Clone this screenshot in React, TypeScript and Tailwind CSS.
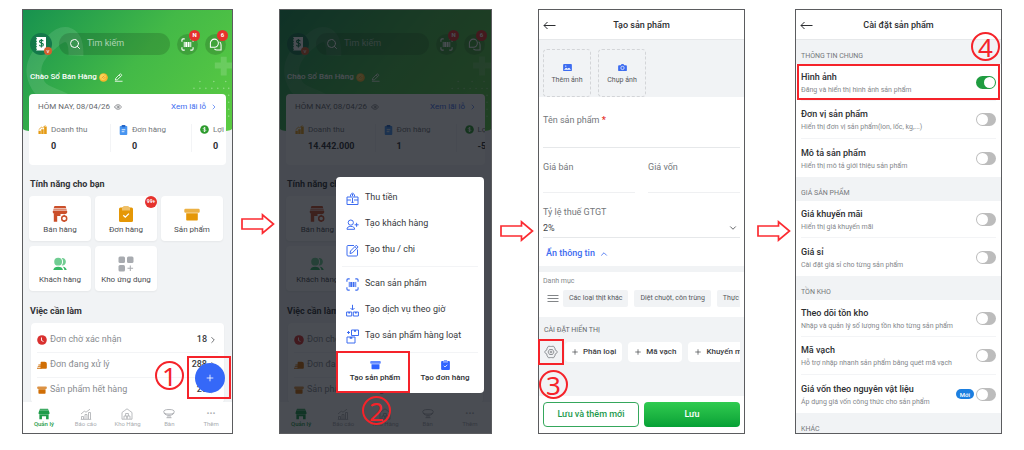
import { ReactNode } from 'react';
import { ChevronDown, ChevronRight, ChevronUp, Eye, Plus, Search } from 'lucide-react';

interface Stats {
  revenue: string;
  orders: string;
  profit: string;
}

interface IconProps {
  className?: string;
}

function StoreIcon({ className }: IconProps) {
  return (
    <svg viewBox="0 0 16 16" className={className} fill="currentColor" aria-hidden="true">
      <path d="M2.500 0h11l.8 2.200H1.700z" />
      <path d="M1.600 2.700h12.800l.7 2H.9z" opacity=".65" />
      <path d="M.8 5.100h14.400c.3 1.700-.5 2.900-1.900 2.900H2.700C1.300 8 .5 6.800.8 5.100z" />
      <path d="M1.800 8h3.400v7.800H1.800zM5 8h3.500v2H5z" />
      <circle cx="12.200" cy="12.500" r="2.500" fill="none" stroke="currentColor" strokeWidth="1.500" />
      <path d="M11.500 8.800h1.400v1.500h-1.400zM11.500 14.700h1.400V16h-1.400z" />
    </svg>
  );
}

function ShopIcon({ className }: IconProps) {
  return (
    <svg viewBox="0 0 14 14" className={className} fill="currentColor" aria-hidden="true">
      <path d="M2.300.8h9.400l.5 1.600H1.800z" opacity=".85" />
      <path d="M1.500 2.700h11l1 3.200c.1 1-.6 1.700-1.600 1.700H2.100c-1 0-1.600-.7-1.500-1.700z" />
      <path d="M1.600 7.500h10.800V13H9.400V9.600H4.600V13h-3z" />
    </svg>
  );
}

function ClipboardIcon({ className }: IconProps) {
  return (
    <svg viewBox="0 0 14 16" className={className} aria-hidden="true">
      <rect y="1.500" width="14" height="14.500" rx="1.500" fill="currentColor" />
      <path d="M4.500 0h5v1.500H11v3H3v-3h1.500z" fill="currentColor" />
      <path d="M4.500 0h5v1.500H11v3H3v-3h1.500z" fill="#fff" fillOpacity=".4" />
      <path d="M4.300 9.200l2 2 3.600-3.600" fill="none" stroke="#fff" strokeWidth="1.300" />
    </svg>
  );
}

function BoxIcon({ className }: IconProps) {
  return (
    <svg viewBox="0 0 16 13" className={className} fill="currentColor" aria-hidden="true">
      <rect x=".3" y=".8" width="15.400" height="3.900" rx="1.200" opacity=".75" />
      <path d="M2.200 5.300h11.600v6.200c0 .7-.5 1-1 1H3.200c-.6 0-1-.4-1-1z" />
    </svg>
  );
}

function PeopleIcon({ className }: IconProps) {
  return (
    <svg viewBox="0 0 15 14" className={className} fill="currentColor" aria-hidden="true">
      <circle cx="5.500" cy="4.500" r="4.200" opacity=".7" />
      <path d="M9.300.5c2.600-.3 4.500 1.600 4.500 4s-1.900 4.300-4.500 4c2-2.400 2-5.600 0-8z" opacity=".7" />
      <path d="M.3 13.500C.6 11.300 2.600 10 5.500 10s4.900 1.300 5.200 3.500zM10.500 10c2.300.2 3.800 1.500 4.200 3.500h-2.500c-.1-1.400-.7-2.600-1.700-3.500z" />
    </svg>
  );
}

function AppsIcon({ className }: IconProps) {
  return (
    <svg viewBox="0 0 16 16" className={className} fill="currentColor" aria-hidden="true">
      <rect x=".5" y=".5" width="6.500" height="6.500" rx="1.500" />
      <rect x="9" y=".5" width="6.500" height="6.500" rx="1.500" />
      <rect x=".5" y="9" width="6.500" height="6.500" rx="1.500" />
      <path d="M11.800 9.500h1v2.300h2.300v1h-2.300v2.300h-1v-2.300H9.500v-1h2.300z" />
    </svg>
  );
}

function ScanIcon({ className }: IconProps) {
  return (
    <svg viewBox="0 0 14 14" className={className} fill="none" stroke="currentColor" strokeWidth="1.200" aria-hidden="true">
      <path d="M1 4V2.200C1 1.500 1.500 1 2.200 1H4M10 1h1.800c.7 0 1.200.5 1.200 1.200V4M13 10v1.800c0 .7-.5 1.200-1.200 1.200H10M4 13H2.200C1.500 13 1 12.500 1 11.800V10" />
      <path d="M3.500 4.200v5.600M10.500 4.200v5.600" strokeWidth="1" />
      <path d="M5.600 4.200v5.600M8.200 4.200v5.600" strokeWidth="2" />
    </svg>
  );
}

function ChatIcon({ className }: IconProps) {
  return (
    <svg viewBox="0 0 14 14" className={className} fill="none" stroke="currentColor" strokeWidth="1.100" aria-hidden="true">
      <path d="M1.500 10V5.500a4.300 4.300 0 118.600 0c0 2.500-1.900 4.500-4.300 4.500z" />
      <path d="M11.500 4.200c1 .7 1.500 1.800 1.500 3.300V13H8.500c-1 0-2-.5-2.700-1.200" />
    </svg>
  );
}

function ReceiptIcon({ className }: IconProps) {
  return (
    <svg viewBox="0 0 22 22" className={className} aria-hidden="true">
      <circle cx="11" cy="11" r="11" fill="#14794a" />
      <path d="M6 4h10v13.500H6l1-1.300-1-1.300 1-1.300-1-1.300 1-1.300-1-1.300 1-1.300-1-1.300 1-1.300z" fill="#fff" />
      <path d="M13.300 8.300c-.3-.8-1-1.200-1.900-1.200-1.100 0-1.900.6-1.900 1.500 0 2 3.900 1 3.900 3.100 0 1-.8 1.600-2 1.600-1 0-1.800-.5-2-1.400M11.400 6v8.400" fill="none" stroke="#14794a" strokeWidth="1.100" />
    </svg>
  );
}

function PencilIcon({ className }: IconProps) {
  return (
    <svg viewBox="0 0 10 10" className={className} fill="none" stroke="currentColor" strokeWidth=".9" aria-hidden="true">
      <path d="M1.500 7.800l.5-2L6.500 1.300c.4-.4.900-.4 1.300 0l.5.5c.4.4.4.900 0 1.300L3.700 7.500zM1 9.200h8.500M5.600 2.300l1.700 1.700" />
    </svg>
  );
}

function CoinIcon({ className }: IconProps) {
  return (
    <svg viewBox="0 0 10 10" className={className} aria-hidden="true">
      <circle cx="5" cy="5" r="4.800" fill="#f6b52c" />
      <circle cx="4.400" cy="4.500" r="3.300" fill="#fbd258" />
      <path d="M3 5.800l3-2.800M5 6.500l2-2" stroke="#e8921c" strokeWidth=".9" />
    </svg>
  );
}

function ChartIcon({ className }: IconProps) {
  return (
    <svg viewBox="0 0 10 10" className={className} fill="currentColor" aria-hidden="true">
      <path d="M.5 6.500h2.600V10H.5zM3.600 4.800h2.700V10H3.600zM6.800 1.800h2.900V10H6.800z" />
      <path d="M.7 5.300l3-2.800 1.300.6L8.300.6" fill="none" stroke="currentColor" strokeWidth=".9" />
    </svg>
  );
}

function NoteIcon({ className }: IconProps) {
  return (
    <svg viewBox="0 0 10 11" className={className} aria-hidden="true">
      <rect x=".8" y="1" width="8.400" height="10" rx="1" fill="#4794f0" />
      <rect x="3" width="4" height="2.500" rx=".5" fill="#2566c8" />
      <path d="M3 5.200h4M3 7.400h3" stroke="#fff" strokeWidth=".9" />
    </svg>
  );
}

function DollarIcon({ className }: IconProps) {
  return (
    <svg viewBox="0 0 10 10" className={className} aria-hidden="true">
      <circle cx="5" cy="5" r="4.800" fill="#2d9b2d" />
      <path d="M6.400 3.700c-.3-.5-.8-.7-1.400-.7-.8 0-1.400.4-1.400.9 0 1.400 2.900.7 2.900 2.100 0 .6-.6 1-1.500 1-.7 0-1.300-.3-1.500-.9M5 2.200v5.600" fill="none" stroke="#fff" strokeWidth=".8" />
    </svg>
  );
}

function ClockIcon({ className }: IconProps) {
  return (
    <svg viewBox="0 0 10 10" className={className} aria-hidden="true">
      <circle cx="5" cy="5" r="4.800" fill="#d9302f" />
      <path d="M4.500 2.500v3l2 1" fill="none" stroke="#fff" strokeWidth=".9" />
    </svg>
  );
}

function MovingIcon({ className }: IconProps) {
  return (
    <svg viewBox="0 0 11 9" className={className} fill="#d06e05" aria-hidden="true">
      <path d="M4 1.500C4 .8 4.500.5 5 .5h3.500c1.500 0 2.300.8 2.300 2.300v4.400c0 .6-.4.900-.9.900H3.800z" />
      <path d="M1.500 3.400h3v1h-3zM.8 5.200h4v1h-4zM0 7.100h5v1H0z" />
    </svg>
  );
}

function ReportTabIcon({ className }: IconProps) {
  return (
    <svg viewBox="0 0 12 12" className={className} fill="none" stroke="currentColor" strokeWidth=".8" aria-hidden="true">
      <path d="M1.500 11V8.500h2V11M5 11V6.500h2V11M8.500 11V4.500h2V11M.8 11.400h10.400M1 6l3.300-2.800 1.700 1 4-3" />
    </svg>
  );
}

function WarehouseIcon({ className }: IconProps) {
  return (
    <svg viewBox="0 0 12 12" className={className} fill="none" stroke="currentColor" strokeWidth=".8" aria-hidden="true">
      <path d="M1 11.200V4.500C2.500 3.500 4 2.200 6 .8c2 1.400 3.500 2.700 5 3.700v6.700zM3 10.800V8h2.800v2.800M6.200 10.800V8H9v2.800M4.600 8V5.500h2.800V8" />
    </svg>
  );
}

function TableIcon({ className }: IconProps) {
  return (
    <svg viewBox="0 0 12 12" className={className} fill="none" stroke="currentColor" strokeWidth=".9" aria-hidden="true">
      <ellipse cx="6" cy="3.800" rx="5.300" ry="2.300" />
      <path d="M1 5c1 1.800 3 2.300 5 2.300S10 6.800 11 5M5 7.300v2.200M7 7.300v2.200M3.500 9.700h5" />
    </svg>
  );
}

function MoneyBoxIcon({ className }: IconProps) {
  return (
    <svg viewBox="0 0 13 13" className={className} fill="none" stroke="currentColor" aria-hidden="true">
      <path d="M1 5h11v7.500H1zM1 8h4M8 8h4M6.500 6v5" />
      <path d="M4.500 4.500V3L6.500.8 8.500 3v1.500M6.500 2v2M5.300 9.800l1.200 1.200 1.200-1.200" />
    </svg>
  );
}

function AddUserIcon({ className }: IconProps) {
  return (
    <svg viewBox="0 0 13 13" className={className} fill="none" stroke="currentColor" aria-hidden="true">
      <circle cx="4.800" cy="4.600" r="2.600" />
      <path d="M1 11.300c0-2 1.300-2.900 3.800-2.900s3.800.9 3.800 2.900zM10.600 4.800v4M8.600 6.800h4" />
    </svg>
  );
}

function ComposeIcon({ className }: IconProps) {
  return (
    <svg viewBox="0 0 13 13" className={className} fill="none" stroke="currentColor" aria-hidden="true">
      <path d="M8 1.500H2c-.6 0-1 .4-1 1V11c0 .6.400 1 1 1h8.500c.6 0 1-.4 1-1V5.500" />
      <path d="M4 9.500l.5-2.500L10.300 1.200l1.800 1.800L6.300 8.900zM9 2.700l1.700 1.800" />
    </svg>
  );
}

function ServiceIcon({ className }: IconProps) {
  return (
    <svg viewBox="0 0 13 13" className={className} fill="none" stroke="currentColor" aria-hidden="true">
      <path d="M6.500.8v5M4.500 4l2 2 2-2M.6 8h5.100v4H.6zM7.300 8h5.100v4H7.300z" />
      <path d="M2.300 8.800h1.700M9 8.800h1.700" strokeWidth="1.600" />
    </svg>
  );
}

function BatchIcon({ className }: IconProps) {
  return (
    <svg viewBox="0 0 13 15" className={className} fill="none" stroke="currentColor" aria-hidden="true">
      <path d="M5.500 1h7v5.500h-7zM1 8h8v6H1zM2.500 2v3M1 3.500h3" />
      <path d="M8 1.800h2M3.700 8.900h2.600" strokeWidth="1.700" />
    </svg>
  );
}

function GearIcon({ className }: IconProps) {
  return (
    <svg viewBox="0 0 14 14" className={className} fill="none" stroke="currentColor" strokeWidth=".9" strokeLinejoin="round" aria-hidden="true">
      <path d="M4.300 1.300h2l.7.7.7-.7h2l1.500 2.600-.2.900.9.300L13.400 7l-1.500 1.900-.9.300.2.900-1.500 2.600h-2L7 12l-.7.7h-2l-1.500-2.600.2-.9-.9-.3L.6 7l1.500-1.900.9-.3-.2-.9z" />
      <path d="M5.500 4.500h3L10 7 8.500 9.500h-3L4 7z" />
      <circle cx="7" cy="7" r=".9" />
    </svg>
  );
}

function StepNumber({ value, className }: { value: number; className: string }) {
  return (
    <span
      className={`absolute z-20 flex size-[29px] items-center justify-center rounded-full border-2 border-[#f5232a] font-['Noto_Sans',sans-serif] text-[26px] leading-none text-[#f5232a] ${className}`}
    >
      {value}
    </span>
  );
}

function FlowArrow({ className }: IconProps) {
  return (
    <div className={`flex justify-end pr-1 ${className}`}>
      <svg viewBox="0 0 34 22" className="h-[22px] w-[34px]" fill="none" stroke="#fb2b31" strokeWidth="1.700" aria-hidden="true">
        <path d="M1 6h20.500V1.800L32.500 11 21.500 20.200V16H1z" />
      </svg>
    </div>
  );
}

function Frame({ children }: { children: ReactNode }) {
  return <section className="relative flex min-w-0 flex-col border border-[#5b5c5f]">{children}</section>;
}

const features = [
  { label: 'Bán hàng', icon: <StoreIcon className="size-4 text-[#cb4f2a]" /> },
  { label: 'Đơn hàng', icon: <ClipboardIcon className="h-4 w-3.5 text-[#e59706]" />, badge: '99+' },
  { label: 'Sản phẩm', icon: <BoxIcon className="h-[13px] w-4 text-[#e59706]" /> },
  { label: 'Khách hàng', icon: <PeopleIcon className="size-3.5 text-[#33b864]" /> },
  { label: 'Kho ứng dụng', icon: <AppsIcon className="size-4 text-[#a8abb0]" /> },
];

const todos = [
  { label: 'Đơn chờ xác nhận', count: '18', icon: <ClockIcon className="size-2.5" /> },
  { label: 'Đơn đang xử lý', count: '288', icon: <MovingIcon className="h-[9px] w-2.5" /> },
  { label: 'Sản phẩm hết hàng', count: '25', icon: <BoxIcon className="h-2 w-2.5 text-[#d06e05]" /> },
];

const tabs = [
  { label: 'Quản lý', icon: <ShopIcon className="size-3" />, active: true },
  { label: 'Báo cáo', icon: <ReportTabIcon className="size-3" /> },
  { label: 'Kho Hàng', icon: <WarehouseIcon className="size-3" /> },
  { label: 'Bàn', icon: <TableIcon className="size-3" /> },
  { label: 'Thêm', icon: <span className="text-[10px] leading-3 font-bold">···</span> },
];

function HomeScreen({ stats }: { stats: Stats }) {
  const items = [
    { label: 'Doanh thu', value: stats.revenue, icon: <ChartIcon className="mt-px size-[9px] text-[#e59b14]" /> },
    { label: 'Đơn hàng', value: stats.orders, icon: <NoteIcon className="mt-px h-2.5 w-[9px]" /> },
    { label: 'Lợi nhuận', value: stats.profit, icon: <DollarIcon className="mt-px size-[9px]" /> },
  ];

  return (
    <div className="flex grow flex-col overflow-hidden bg-[#f1f3f5]">
      <header className="relative px-1.5 pt-[23px]">
        {/* Green backdrop */}
        <div className="absolute inset-x-0 top-0 h-[125px] overflow-hidden rounded-b-[50%_6px] bg-[linear-gradient(130deg,#17924f_0%,#43b947_50%,#5ccc42_100%)]">
          <svg viewBox="0 0 212 126" className="h-full w-full" preserveAspectRatio="xMidYMid slice" aria-hidden="true">
            <path
              d="M54 46C55 22 42 20 30 32 10 48 8 62 16 76 24 90 52 84 58 112"
              fill="none"
              stroke="#fff"
              strokeOpacity=".11"
              strokeWidth="15"
            />
            <path d="M200 47h6v6h8v6h-8v7h-6v-7h-6v-6h6z" fill="#fff" fillOpacity=".15" />
            <g fill="#fff" fillOpacity=".35">
              {[173, 179, 185, 191, 197, 203, 208].map((x) => (
                <circle key={x} cx={x} cy="79" r=".8" />
              ))}
              {[179, 193, 205].map((x) => (
                <circle key={x} cx={x} cy="72" r=".8" />
              ))}
              {[86, 93, 100, 107].map((y) => (
                <circle key={y} cx="208" cy={y} r=".8" />
              ))}
            </g>
          </svg>
        </div>

        <div className="relative flex h-[22px] items-center">
          <div className="relative ml-px size-[22px] shrink-0">
            <ReceiptIcon className="size-[22px]" />
            <span className="absolute right-0 bottom-0 flex size-2 items-center justify-center rounded-full bg-[#d2602f] text-[6px] leading-none text-white">
              v
            </span>
          </div>
          <label className="ml-[7px] flex h-[22px] min-w-0 grow items-center gap-1.5 rounded-full bg-black/15 pl-2.5">
            <Search className="size-3 shrink-0 text-white" strokeWidth={2} />
            <input
              type="search"
              aria-label="Tìm kiếm"
              placeholder="Tìm kiếm"
              className="w-full min-w-0 bg-transparent text-[9px] text-white outline-none placeholder:text-white/60"
            />
          </label>
          <button aria-label="Quét mã" className="relative ml-[7px] flex size-[21px] shrink-0 items-center justify-center rounded-full bg-black/15 text-white">
            <ScanIcon className="size-[13px]" />
            <span className="absolute -top-1 -right-0.5 flex size-[11px] items-center justify-center rounded-full bg-[#e5322d] text-[6px] leading-none font-bold">
              N
            </span>
          </button>
          <button aria-label="Tin nhắn" className="relative ml-[7px] flex size-[21px] shrink-0 items-center justify-center rounded-full bg-black/15 text-white">
            <ChatIcon className="size-[13px]" />
            <span className="absolute -top-1 -right-0.5 flex size-[11px] items-center justify-center rounded-full bg-[#e5322d] text-[6px] leading-none font-bold">
              6
            </span>
          </button>
        </div>

        <div className="relative mt-4 flex h-3 items-center gap-0.5 pl-px text-[8px] font-medium text-white">
          <span>Chào Sổ Bán Hàng</span>
          <CoinIcon className="size-[9px]" />
          <button aria-label="Sửa tên" className="ml-1">
            <PencilIcon className="size-[9px]" />
          </button>
        </div>

        {/* Today summary */}
        <div className="relative mt-[11px] h-[71px] overflow-hidden rounded bg-white pl-[9px]">
          <div className="flex h-[26px] items-center text-[8px]">
            <span className="text-[#65686c]">HÔM NAY, 08/04/26</span>
            <Eye className="ml-1 size-2 text-[#65686c]" />
            <a href="#" className="mr-2 ml-auto flex items-center gap-1 text-[#3d6cf0]">
              Xem lãi lỗ
              <ChevronRight className="size-2" />
            </a>
          </div>
          <div className="mt-1 flex divide-x divide-gray-100">
            {items.map((item) => (
              <div key={item.label} className="mr-2 flex min-w-[73px] shrink-0 gap-1 pr-5">
                {item.icon}
                <div className="whitespace-nowrap">
                  <div className="text-[8px] leading-3 text-[#74777b]">{item.label}</div>
                  <div className="mt-1 text-[9px] leading-3 font-bold text-[#2c2e31]">{item.value}</div>
                </div>
              </div>
            ))}
          </div>
        </div>
      </header>

      <h2 className="mt-[13px] px-[7px] text-[9px] leading-3 font-bold text-[#313337]">Tính năng cho bạn</h2>
      <div className="mt-[6px] mr-[9px] ml-1.5 grid grid-cols-3 gap-x-1 gap-y-[5px]">
        {features.map((feature) => (
          <button key={feature.label} className="relative flex h-[45px] flex-col items-center rounded bg-white pt-2.5 text-[8px] text-[#4b4d51] shadow-xs">
            <span className="flex h-4 items-center">{feature.icon}</span>
            <span className="mt-0.5 leading-3 whitespace-nowrap">{feature.label}</span>
            {feature.badge && (
              <span className="absolute top-0 right-0 flex size-3 items-center justify-center rounded-full bg-[#e5322d] text-[5px] font-bold text-white">
                {feature.badge}
              </span>
            )}
          </button>
        ))}
      </div>

      <h2 className="mt-[14px] px-[7px] text-[9px] leading-3 font-bold text-[#313337]">Việc cần làm</h2>
      <div className="mt-[6px] h-[79px] overflow-hidden px-2">
        <ul className="rounded bg-white px-1.5 pt-[5px] shadow-xs">
          {todos.map((todo) => (
            <li key={todo.label} className="flex h-[25px] items-center border-b border-gray-100 text-[9px]">
              {todo.icon}
              <span className="ml-[3px] text-[#898c90]">{todo.label}</span>
              <span className="mr-px ml-auto font-medium text-[#3a3c3f]">{todo.count}</span>
              <ChevronRight className="size-2.5 text-[#55585c]" />
            </li>
          ))}
        </ul>
      </div>

      <nav className="mt-auto grid h-[31px] shrink-0 grid-cols-5 bg-white">
        {tabs.map((tab) => (
          <a
            key={tab.label}
            href="#"
            className={`flex flex-col items-center pt-[6px] text-[6px] ${tab.active ? 'font-medium text-[#1f9c4a]' : 'text-[#a9acb0]'}`}
          >
            {tab.icon}
            <span className="leading-2">{tab.label}</span>
          </a>
        ))}
      </nav>
    </div>
  );
}

const menuGroups = [
  [
    { label: 'Thu tiền', icon: <MoneyBoxIcon className="size-[13px]" /> },
    { label: 'Tạo khách hàng', icon: <AddUserIcon className="size-[13px]" /> },
    { label: 'Tạo thu / chi', icon: <ComposeIcon className="size-[13px]" /> },
  ],
  [
    { label: 'Scan sản phẩm', icon: <ScanIcon className="size-[13px]" /> },
    { label: 'Tạo dịch vụ theo giờ', icon: <ServiceIcon className="size-[13px]" /> },
    { label: 'Tạo sản phẩm hàng loạt', icon: <BatchIcon className="h-[15px] w-[13px]" /> },
  ],
];

function QuickMenu() {
  return (
    <div className="absolute right-[7px] bottom-10 w-[148px] rounded bg-white">
      <div className="px-1.5 pt-1">
        {menuGroups.map((group, i) => (
          <div key={i} className="border-b border-gray-100 pt-1 pb-[3px]">
            {group.map((item) => (
              <button key={item.label} className="flex h-[26px] w-full items-center gap-1.5 pl-1 text-[9px] whitespace-nowrap text-[#37393d]">
                <span className="text-[#3d6cf0]">{item.icon}</span>
                {item.label}
              </button>
            ))}
          </div>
        ))}
      </div>
      <div className="grid grid-cols-2 text-[8px] font-medium text-[#2c2e31]">
        <button className="relative flex h-10 flex-col items-center pt-[7px] pl-1">
          <BoxIcon className="h-2.5 w-[11px] text-[#2f62ff]" />
          <span className="mt-0.5 leading-3 whitespace-nowrap">Tạo sản phẩm</span>
          <span className="absolute inset-x-0 -top-0.5 bottom-0 border-2 border-[#f5232a]" />
        </button>
        <button className="flex h-10 flex-col items-center pt-[7px] pr-1">
          <ClipboardIcon className="h-2.5 w-[9px] text-[#2f62ff]" />
          <span className="mt-0.5 leading-3 whitespace-nowrap">Tạo đơn hàng</span>
        </button>
      </div>
      <StepNumber value={2} className="-bottom-8 left-[26px]" />
    </div>
  );
}

function ScreenHeader({ title }: { title: string }) {
  return (
    <header className="relative flex h-[30px] shrink-0 items-center justify-center border-b border-[#e6e8ea] bg-white pt-0.5">
      <button aria-label="Quay lại" className="absolute left-1 text-[#2c2e31]">
        <svg viewBox="0 0 13 9" className="h-[9px] w-[13px]" fill="none" stroke="currentColor" aria-hidden="true">
          <path d="M1 4.500h11.500M4.500 1L1 4.500 4.500 8" />
        </svg>
      </button>
      <h1 className="text-[9px] font-medium text-[#2c2e31]">{title}</h1>
    </header>
  );
}

function CreateProductScreen() {
  return (
    <div className="flex grow flex-col bg-white text-[8px]">
      <ScreenHeader title="Tạo sản phẩm" />

      <div className="flex gap-[7px] bg-[#f1f3f5] px-1 pt-[9px]">
        <button className="flex h-12 w-12 flex-col items-center justify-center gap-1 rounded-sm border border-dashed border-[#d3d5d8] pt-1 text-[7px] text-[#55585c]">
          <svg viewBox="0 0 10 8" className="h-[7px] w-[9px]" aria-hidden="true">
            <rect width="10" height="8" rx="1" fill="#3d6cf0" />
            <path d="M1 6.500l2.300-2.300L5 5.500l1.800-1.300L9 6.500z" fill="#fff" />
            <circle cx="3" cy="2.400" r=".8" fill="#fff" />
          </svg>
          Thêm ảnh
        </button>
        <button className="flex h-12 w-12 flex-col items-center justify-center gap-1 rounded-sm border border-dashed border-[#d3d5d8] pt-1 text-[7px] text-[#55585c]">
          <svg viewBox="0 0 10 8" className="h-[7px] w-[9px]" aria-hidden="true">
            <path d="M1 1.500h2L4 0h2l1 1.500h2c.6 0 1 .4 1 1V7c0 .6-.4 1-1 1H1c-.6 0-1-.4-1-1V2.500c0-.6.4-1 1-1z" fill="#3d6cf0" />
            <circle cx="5" cy="4.500" r="1.900" fill="none" stroke="#fff" strokeWidth=".8" />
          </svg>
          Chụp ảnh
        </button>
      </div>

      <div className="px-1 text-[9px] text-[#74777b]">
        <label className="flex h-[51px] flex-col border-b border-[#e6e8ea] pt-[17px] leading-3">
          <span>
            Tên sản phẩm <span className="font-bold text-[#e5322d]">*</span>
          </span>
          <input className="h-4 w-full outline-none" />
        </label>
        <div className="grid grid-cols-2 gap-[13px]">
          <label className="flex h-[45px] flex-col border-b border-[#eff0f2] pt-[13px] leading-3">
            Giá bán
            <input inputMode="numeric" className="h-4 w-full outline-none" />
          </label>
          <label className="flex h-[45px] flex-col border-b border-[#eff0f2] pt-[13px] leading-3">
            Giá vốn
            <input inputMode="numeric" className="h-4 w-full outline-none" />
          </label>
        </div>
        <label className="relative flex h-[45px] flex-col border-b border-[#e6e8ea] pt-[13px] leading-3">
          Tỷ lệ thuế GTGT
          <select className="mt-1 h-3 w-full appearance-none bg-transparent leading-3 text-[#44474b] outline-none">
            <option>2%</option>
          </select>
          <ChevronDown className="pointer-events-none absolute right-0.5 bottom-1 size-2.5 text-[#44474b]" />
        </label>
        <button className="flex h-7 items-center gap-1 px-[3px] pt-1 font-medium text-[#3d6cf0]">
          Ẩn thông tin
          <ChevronUp className="size-2.5" />
        </button>
      </div>

      <div className="border-t-6 border-[#f1f3f5] px-1 pt-1">
        <div className="text-[7px] leading-[10px] text-[#85888c]">Danh mục</div>
        <div className="mt-1 flex items-center gap-1.5 overflow-hidden pb-2.5 text-[7px] text-[#55585c]">
          <button aria-label="Danh mục" className="px-1 text-[#74777b]">
            <svg viewBox="0 0 12 9" className="h-[9px] w-3" fill="none" stroke="currentColor" strokeWidth=".9" aria-hidden="true">
              <path d="M.5 1.500h11M.5 4.500h11M.5 7.500h11" />
            </svg>
          </button>
          <button className="-ml-1.5 h-[17px] shrink-0 rounded-xs bg-[#f1f3f5] px-1.5">Các loại thịt khác</button>
          <button className="h-[17px] shrink-0 rounded-xs bg-[#f1f3f5] px-1.5">Diệt chuột, côn trùng</button>
          <button className="h-[17px] shrink-0 rounded-xs bg-[#f1f3f5] px-1.5">Thực phẩm</button>
        </div>
      </div>

      <div className="relative grow bg-[#f1f3f5] px-1 pt-2">
        <div className="pl-px text-[7px] leading-[10px] text-[#65686c]">CÀI ĐẶT HIỂN THỊ</div>
        <div className="relative mt-[7px] flex items-center gap-1.5">
          <button aria-label="Cài đặt hiển thị" className="relative flex h-5 w-4 shrink-0 items-center justify-center text-[#85888c]">
            <GearIcon className="size-3.5 shrink-0" />
            <span className="absolute -inset-x-[5px] -inset-y-[3px] border-2 border-[#f5232a]" />
          </button>
          <div className="flex min-w-0 gap-1.5 overflow-hidden font-medium text-[#3a3c3f]">
            {['Phân loại', 'Mã vạch', 'Khuyến mãi'].map((label) => (
              <button key={label} className="flex h-5 shrink-0 items-center gap-1 rounded-sm bg-white px-1.5">
                <Plus className="size-2" />
                {label}
              </button>
            ))}
          </div>
        </div>
        <StepNumber value={3} className="top-[53px] left-0" />
      </div>

      <footer className="grid grid-cols-2 gap-[5px] px-1 py-1.5 text-[9px] font-medium">
        <button className="h-[25px] rounded-sm border border-[#35a75c] text-[#229a4c]">Lưu và thêm mới</button>
        <button className="h-[25px] rounded-sm bg-linear-to-b from-[#2fcb50] to-[#04a136] text-white">Lưu</button>
      </footer>
    </div>
  );
}

interface Setting {
  title: string;
  hint: string;
  on?: boolean;
  isNew?: boolean;
}

const settingGroups: { name: string; settings: Setting[] }[] = [
  {
    name: 'THÔNG TIN CHUNG',
    settings: [
      { title: 'Hình ảnh', hint: 'Đăng và hiển thị hình ảnh sản phẩm', on: true },
      { title: 'Đơn vị sản phẩm', hint: 'Hiển thị đơn vị sản phẩm(lon, lốc, kg,...)' },
      { title: 'Mô tả sản phẩm', hint: 'Hiển thị mô tả giới thiệu sản phẩm' },
    ],
  },
  {
    name: 'GIÁ SẢN PHẨM',
    settings: [
      { title: 'Giá khuyến mãi', hint: 'Hiển thị giá khuyến mãi' },
      { title: 'Giá sỉ', hint: 'Cài đặt giá sỉ cho từng sản phẩm' },
    ],
  },
  {
    name: 'TỒN KHO',
    settings: [
      { title: 'Theo dõi tồn kho', hint: 'Nhập và quản lý số lượng tồn kho từng sản phẩm' },
      { title: 'Mã vạch', hint: 'Hỗ trợ nhập nhanh sản phẩm bằng quét mã vạch' },
      { title: 'Giá vốn theo nguyên vật liệu', hint: 'Áp dụng giá vốn công thức cho sản phẩm', isNew: true },
    ],
  },
  { name: 'KHÁC', settings: [] },
];

function SettingRow({ setting }: { setting: Setting }) {
  return (
    <label className="relative flex h-[37px] items-center whitespace-nowrap not-first:h-[38px]">
      <span className="min-w-0 grow pt-px">
        <span className="block text-[9px] leading-3 font-medium text-[#2c2e31]">{setting.title}</span>
        <span className="mt-0.5 block text-[7px] leading-[10px] text-[#85888c]">{setting.hint}</span>
      </span>
      {setting.isNew && (
        <span className="mr-0.5 flex h-2.5 items-center rounded-full bg-[#1c7fe0] px-1 text-[6px] font-medium text-white">Mới</span>
      )}
      <input
        type="checkbox"
        defaultChecked={setting.on}
        className="h-[13px] w-5 shrink-0 appearance-none rounded-full bg-[#bcbcbc] p-px before:block before:size-[11px] before:rounded-full before:bg-white checked:bg-[#1f9c40] checked:before:ml-[7px]"
      />
      {setting.on && <span className="absolute -inset-x-1 inset-y-0 border-2 border-[#f5232a]" />}
    </label>
  );
}

function ProductSettingsScreen() {
  return (
    <div className="relative flex grow flex-col bg-[#f1f3f5]">
      <ScreenHeader title="Cài đặt sản phẩm" />
      {settingGroups.map((group) => (
        <div key={group.name}>
          <h2 className="flex h-6 items-end px-[5px] pb-[3px] text-[7px] leading-[10px] text-[#74777b] last:h-5 last:pb-0 last:leading-2">
            {group.name}
          </h2>
          {group.settings.length > 0 && (
            <div className="divide-y divide-gray-100 bg-white px-[5px]">
              {group.settings.map((setting) => (
                <SettingRow key={setting.title} setting={setting} />
              ))}
            </div>
          )}
        </div>
      ))}
      <StepNumber value={4} className="top-[22px] right-[1px]" />
    </div>
  );
}

export default function App() {
  return (
    <main className="grid grid-cols-[211fr_46px_213fr_46px_207fr_50px_207fr] bg-white px-[22px] pt-[9px] pb-4 font-[Roboto,sans-serif]">
      <Frame>
        <HomeScreen stats={{ revenue: '0', orders: '0', profit: '0' }} />
        <button
          aria-label="Tạo mới"
          className="absolute right-[7px] bottom-10 flex size-[30px] items-center justify-center rounded-full bg-[#3568f8] text-white"
        >
          <Plus className="size-2.5" />
        </button>
        <span className="absolute right-px bottom-[34px] h-[43px] w-11 border-2 border-[#f5232a]" />
        <StepNumber value={1} className="right-12 bottom-[43px]" />
      </Frame>

      <FlowArrow className="mt-[204px] self-start" />

      <Frame>
        <HomeScreen stats={{ revenue: '14.442.000', orders: '1', profit: '-500.000' }} />
        <div className="absolute inset-0 bg-[#0d1119]/75" />
        <QuickMenu />
      </Frame>

      <FlowArrow className="mt-[211px] self-start" />

      <Frame>
        <CreateProductScreen />
      </Frame>

      <FlowArrow className="mt-[211px] self-start" />

      <Frame>
        <ProductSettingsScreen />
      </Frame>
    </main>
  );
}
